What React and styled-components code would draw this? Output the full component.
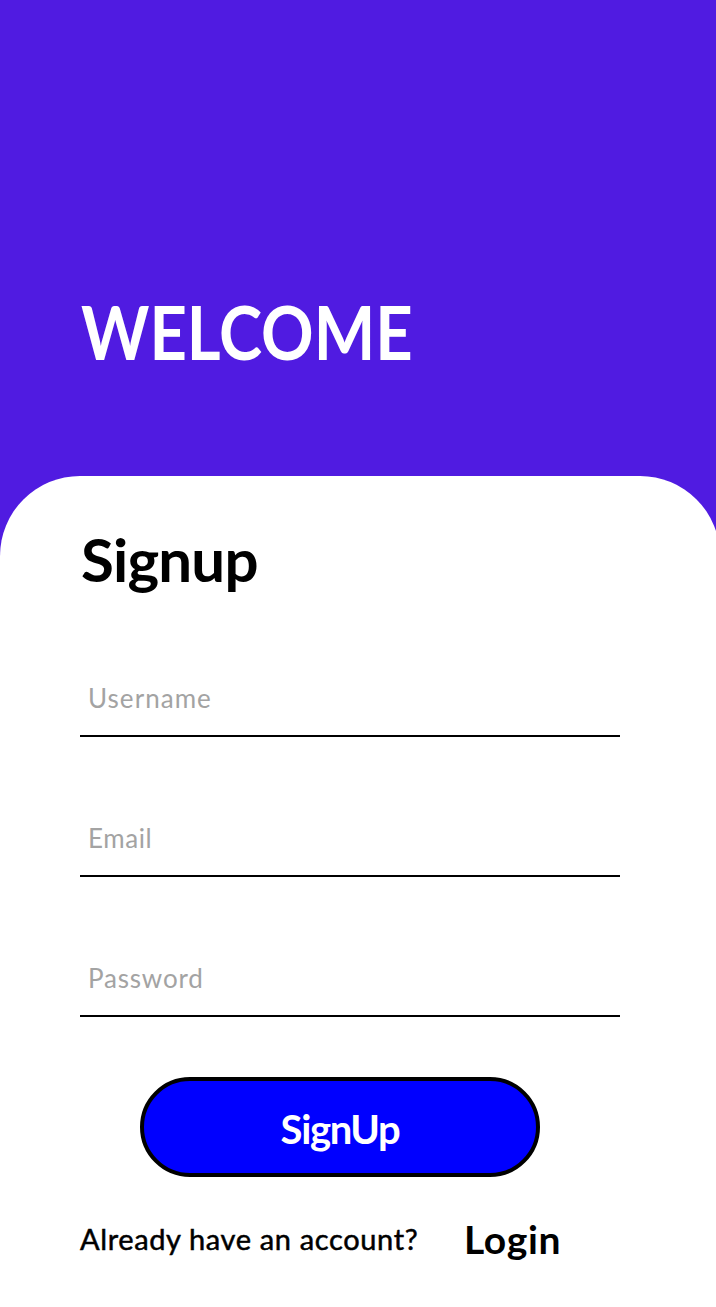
import React from "react";
import styled, { createGlobalStyle } from "styled-components";

const GlobalStyle = createGlobalStyle`
  *, *::before, *::after { box-sizing: border-box; }
  html, body { margin: 0; padding: 0; background: #fff; overflow: hidden; }
  body, input, button { font-family: Lato, "Open Sans", sans-serif; }
`;

const Screen = styled.main`
  width: 100%;
  height: 1307px;
  overflow: hidden;
  background: #501be1;
`;

const Hero = styled.header`
  height: 476px;
  padding: 288px 0 0 81px;
`;

const Welcome = styled.h1`
  margin: 0;
  color: #fff;
  font-size: 75px;
  line-height: 86px;
  font-weight: 700;
  white-space: nowrap;
  transform: scaleX(0.868);
  transform-origin: left center;
`;

const Sheet = styled.section`
  width: 720px;
  height: 831px;
  padding: 43px 100px 0 80px;
  border-radius: 80px 80px 0 0;
  background: #fff;
`;

const Heading = styled.h2`
  margin: 0;
  height: 80px;
  padding-left: 1px;
  color: #000;
  font-size: 60px;
  line-height: 80px;
  font-weight: 700;
  letter-spacing: -0.8px;
`;

const Form = styled.form`
  display: flex;
  flex-direction: column;
  padding-top: 58px;
`;

const Field = styled.input`
  width: 540px;
  height: 80px;
  margin-bottom: 60px;
  padding: 4px 8px 0;
  border: 0;
  border-bottom: 2px solid #000;
  border-radius: 0;
  outline: 0;
  background: transparent;
  color: #000;
  font-size: 26px;
  letter-spacing: ${(p) => p.$tracking}px;
  &::placeholder { color: #a3a3a3; opacity: 1; }
`;

const SubmitButton = styled.button`
  align-self: flex-start;
  width: 400px;
  height: 100px;
  margin-left: 60px;
  padding: 4px 0 0;
  border: 4px solid #000;
  border-radius: 50px;
  background: #0000ff;
  color: #fff;
  font-size: 40px;
  font-weight: 700;
  letter-spacing: -1.3px;
`;

const Footer = styled.footer`
  display: flex;
  align-items: flex-start;
  padding-top: 36px;
  color: #000;
  white-space: nowrap;
`;

const Prompt = styled.span`
  width: 384px;
  font-size: 29px;
  line-height: 52px;
  letter-spacing: 0.63px;
  -webkit-text-stroke: 0.5px #000;
`;

const LoginLink = styled.a`
  font-size: 39px;
  line-height: 52px;
  font-weight: 700;
  letter-spacing: 0.6px;
`;

export default function App() {
  return (
    <>
      <GlobalStyle />
      <Screen>
        <Hero>
          <Welcome>WELCOME</Welcome>
        </Hero>
        <Sheet>
          <Heading>Signup</Heading>
          <Form>
            <Field type="text" placeholder="Username" $tracking={1.05} />
            <Field type="email" placeholder="Email" $tracking={0.6} />
            <Field type="password" placeholder="Password" $tracking={0.8} />
            <SubmitButton type="button">SignUp</SubmitButton>
          </Form>
          <Footer>
            <Prompt>Already have an account?</Prompt>
            <LoginLink>Login</LoginLink>
          </Footer>
        </Sheet>
      </Screen>
    </>
  );
}
